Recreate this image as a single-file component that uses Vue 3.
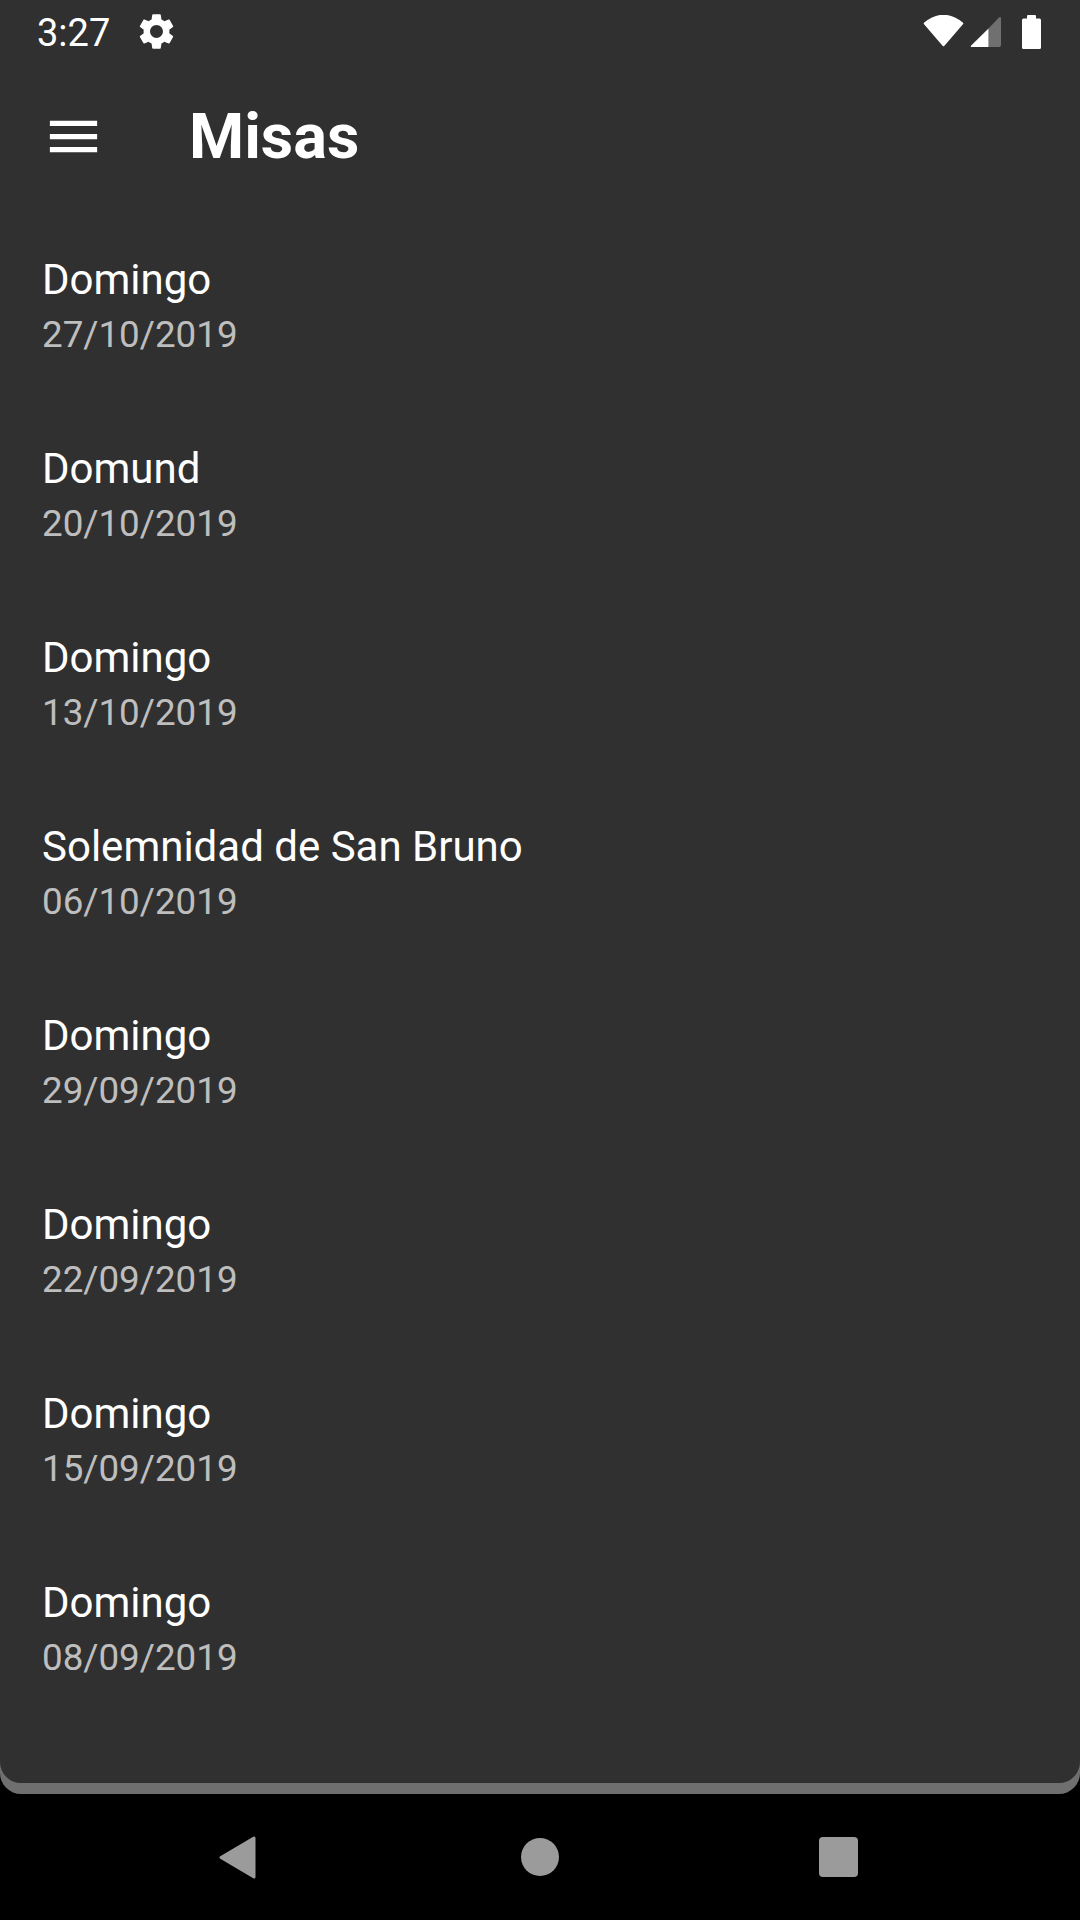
<script setup>
const items = [
  { title: 'Domingo', date: '27/10/2019' },
  { title: 'Domund', date: '20/10/2019' },
  { title: 'Domingo', date: '13/10/2019' },
  { title: 'Solemnidad de San Bruno', date: '06/10/2019' },
  { title: 'Domingo', date: '29/09/2019' },
  { title: 'Domingo', date: '22/09/2019' },
  { title: 'Domingo', date: '15/09/2019' },
  { title: 'Domingo', date: '08/09/2019' },
]
</script>

<template>
  <div class="screen">
    <div class="backing">
      <div class="sheet">
        <div class="status">
          <span class="time">3:27</span>
          <svg class="gear" width="43" height="43" viewBox="0 0 24 24" fill="#fff">
            <path d="M19.14 12.94c.04-.3.06-.61.06-.94 0-.32-.02-.64-.07-.94l2.03-1.58c.18-.14.23-.41.12-.61l-1.92-3.32c-.12-.22-.37-.29-.59-.22l-2.39.96c-.5-.38-1.03-.7-1.62-.94l-.36-2.54c-.04-.24-.24-.41-.48-.41h-3.84c-.24 0-.43.17-.47.41l-.36 2.54c-.59.24-1.13.57-1.62.94l-2.39-.96c-.22-.08-.47 0-.59.22L2.74 8.87c-.12.21-.08.47.12.61l2.03 1.58c-.05.3-.09.63-.09.94s.02.64.07.94l-2.03 1.58c-.18.14-.23.41-.12.61l1.92 3.32c.12.22.37.29.59.22l2.39-.96c.5.38 1.03.7 1.62.94l.36 2.54c.05.24.24.41.48.41h3.84c.24 0 .44-.17.47-.41l.36-2.54c.59-.24 1.13-.56 1.62-.94l2.39.96c.22.08.47 0 .59-.22l1.92-3.32c.12-.22.07-.47-.12-.61l-2.01-1.58zM12 15.6c-1.98 0-3.6-1.62-3.6-3.6s1.62-3.6 3.6-3.6 3.6 1.62 3.6 3.6-1.62 3.6-3.6 3.6z" />
          </svg>
          <div class="status-right">
            <svg class="wifi" width="42" height="33" viewBox="0 0 42 33">
              <path d="M2 8.5 Q20.5 -6.5 39 8.5 L20.5 30 Z" fill="#fff" stroke="#fff" stroke-width="2.5" stroke-linejoin="round" />
            </svg>
            <svg class="signal" width="32" height="32" viewBox="0 0 32 32">
              <path d="M18.5 12.5 L29 1.5 Q31 0 31 2.5 V29 Q31 31 29 31 H18.5 Z" fill="#707070" />
              <path d="M18.5 12.5 V31 H2 Q0 31 1.2 29.5 Z" fill="#fff" />
            </svg>
            <svg class="battery" width="19" height="34" viewBox="0 0 19 34">
              <path d="M5 3.5 V1 Q5 0 6 0 H13 Q14 0 14 1 V3.5 H17.5 Q19 3.5 19 5 V32.5 Q19 34 17.5 34 H1.5 Q0 34 0 32.5 V5 Q0 3.5 1.5 3.5 Z" fill="#fff" />
            </svg>
          </div>
        </div>

        <div class="appbar">
          <svg class="menu" width="63" height="63" viewBox="0 0 24 24" fill="#fff">
            <path d="M3 18h18v-2H3v2zm0-5h18v-2H3v2zm0-7v2h18V6H3z" />
          </svg>
          <span class="title">Misas</span>
        </div>

        <div class="list">
          <div v-for="(item, i) in items" :key="i" class="row">
            <div class="row-title">{{ item.title }}</div>
            <div class="row-date">{{ item.date }}</div>
          </div>
        </div>
      </div>
    </div>

    <div class="nav">
      <svg class="nav-back" width="37" height="43" viewBox="0 0 37 43">
        <path d="M35 2 V41 L2 21.5 Z" fill="#9b9b9b" stroke="#9b9b9b" stroke-width="3" stroke-linejoin="round" />
      </svg>
      <div class="nav-home"></div>
      <div class="nav-recent"></div>
    </div>
  </div>
</template>

<style>
html, body { margin: 0; background: #000; }
</style>

<style scoped>
.screen {
  width: 1080px;
  height: 1920px;
  display: flex;
  flex-direction: column;
  overflow: hidden;
  background: #000;
  font-family: Roboto, "Liberation Sans", sans-serif;
  color: #fff;
}
.backing {
  height: 1794px;
  flex: none;
  box-sizing: border-box;
  padding-bottom: 11px;
  background: #6f6f6f;
  border-radius: 0 0 21px 21px;
}
.sheet {
  height: 100%;
  background: #303030;
  border-radius: 0 0 21px 21px;
}
.status {
  height: 63px;
  display: flex;
  align-items: center;
  padding: 0 39px 0 37px;
}
.time { font-size: 38px; line-height: 63px; margin-top: 4px; }
.gear { margin-left: 25px; }
.status-right {
  margin-left: auto;
  display: flex;
  align-items: center;
}
.signal { margin-left: 5px; }
.battery { margin-left: 20px; }
.appbar {
  height: 147px;
  display: flex;
  align-items: center;
  padding-left: 42px;
}
.title {
  margin-left: 84px;
  font-size: 63px;
  font-weight: 700;
  line-height: 147px;
}
.row {
  height: 189px;
  box-sizing: border-box;
  padding: 43px 42px 0;
}
.row-title { font-size: 42px; line-height: 54px; }
.row-date { font-size: 36.75px; line-height: 54px; margin-top: 1px; color: rgba(255, 255, 255, 0.7); }
.nav {
  flex: 1;
  display: flex;
  align-items: center;
  padding-left: 219px;
}
.nav-home {
  width: 38px;
  height: 38px;
  margin-left: 265px;
  border-radius: 50%;
  background: #9b9b9b;
}
.nav-recent {
  width: 39px;
  height: 40px;
  margin-left: 260px;
  border-radius: 4px;
  background: #9b9b9b;
}
</style>
